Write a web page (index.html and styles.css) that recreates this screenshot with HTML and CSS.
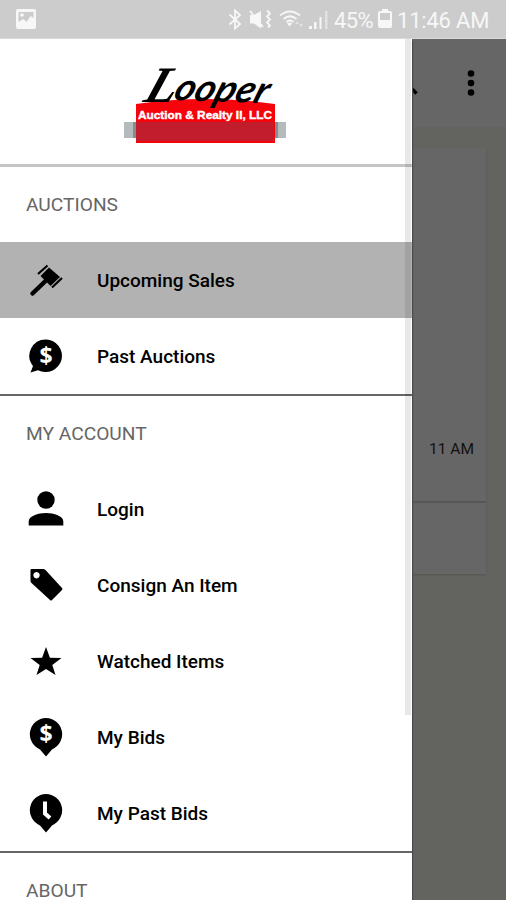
FILE: index.html
```html
<!DOCTYPE html>
<html lang="en">

<head>
    <meta charset="UTF-8">
    <meta name="viewport" content="width=device-width, initial-scale=1.0">
    <title>Looper Auction &amp; Realty</title>

    <link rel="stylesheet" href="styles.css">
</head>

<body>
    <header class="status">
        <svg class="status-picture" viewBox="0 0 20 20" width="20" height="20">
            <path fill-rule="evenodd" d="M2 0h16a2 2 0 0 1 2 2v16a2 2 0 0 1-2 2H2a2 2 0 0 1-2-2V2a2 2 0 0 1 2-2zM2.500 3v10l5-3 3 3 4-6 3 2V3z"/>
            <circle cx="6" cy="6" r="1.800"/>
        </svg>
        <svg class="status-icons" viewBox="228 0 101 38" width="101" height="38">
            <path class="line" d="M229.500 14.500L240 24l-5 4.500v-18l5 4.500-10.500 9.500"/>
            <path d="M250 15h4l7-4v17.500l-7-5h-4z"/>
            <path class="line" d="M250 11l13 16M267 10.500l3 3-3 3 3 3-3 3 3 3-2 2"/>
            <path class="line" d="M280 15.500q10-8 20 0M283.500 19q6.500-5.500 13 0M286.500 22q3.500-3 7 0"/>
            <path d="M287 23.500q3-2 5 0l-2.500 3z"/>
            <path class="faint" d="M295 24l2-3 2 3zM299 24h4l-2 3z"/>
            <path d="M309 26h3v3h-3zM314 22h2.500v7H314zM319.500 17h2v12h-2z"/>
            <path class="faint" d="M325 11h2.500v18H325z"/>
        </svg>
        <span class="status-battery">45%</span>
        <svg class="status-cell" viewBox="0 0 14 20" width="14" height="20">
            <path fill-rule="evenodd" d="M4 0h6v2h2q2 0 2 2v13q0 2-2 2H2q-2 0-2-2V4q0-2 2-2h2zM2 4v7h10V4z"/>
        </svg>
        <span class="status-time">11:46 AM</span>
    </header>

    <div class="screen">
        <main class="page">
            <div class="toolbar">
                <svg class="search" viewBox="0 0 24 24" width="28" height="28">
                    <circle cx="9.500" cy="9.500" r="5.500"/>
                    <path d="M14 14l7 7"/>
                </svg>
                <svg class="more" viewBox="0 0 8 28" width="8" height="28">
                    <circle cx="4" cy="4.500" r="3.300"/>
                    <circle cx="4" cy="14" r="3.300"/>
                    <circle cx="4" cy="23.500" r="3.300"/>
                </svg>
            </div>
            <div class="card">
                <div class="card-body">11 AM</div>
                <div class="card-footer"></div>
            </div>
        </main>

        <nav class="drawer">
            <div class="brand">
                <svg viewBox="0 0 164 80" width="164" height="80">
                    <path class="brand-bar" d="M1 57h162v16H1z"/>
                    <path class="brand-shade" d="M10 57h4v16h-4zM151 57h4v16h-4z"/>
                    <path class="brand-red" d="M13 39q35-5 70-5 35 0 69 5v39H13z"/>
                    <path class="brand-dark" d="M13 57h138v19H13z"/>
                    <text class="brand-name brand-initial" transform="translate(19 37) skewX(-20)" textLength="31" lengthAdjust="spacingAndGlyphs">L</text>
                    <text class="brand-name" transform="translate(49 35) rotate(2) skewX(-18)" textLength="93" lengthAdjust="spacingAndGlyphs">ooper</text>
                    <text class="brand-sub" x="15" y="54" textLength="134" lengthAdjust="spacingAndGlyphs">Auction &amp; Realty II, LLC</text>
                </svg>
            </div>

            <section>
                <h3>AUCTIONS</h3>
                <a class="item active">
                    <svg viewBox="0 0 36 36" width="36" height="36">
                        <path class="handle" d="M18 18.500L4.500 31.500"/>
                        <path class="line" d="M10 12L19.500 3.500M24 25.500l10-9.500"/>
                        <path d="M12.500 14L21 5.500l11 9.500-9.500 9z"/>
                    </svg>
                    Upcoming Sales
                </a>
                <a class="item">
                    <svg viewBox="0 0 36 36" width="36" height="36">
                        <path d="M18 1.500a16.300 16.300 0 1 1-8 30.700L2.500 34.500 5 28A16.300 16.300 0 0 1 18 1.500z"/>
                        <text class="sign" x="18" y="25.500">$</text>
                    </svg>
                    Past Auctions
                </a>
            </section>

            <section>
                <h3>MY ACCOUNT</h3>
                <a class="item">
                    <svg viewBox="0 0 36 36" width="36" height="36">
                        <circle cx="18" cy="9" r="8.700"/>
                        <path d="M.7 34.500v-4C.7 25 10 22 18 22s17.300 3 17.300 8.500v4z"/>
                    </svg>
                    Login
                </a>
                <a class="item">
                    <svg viewBox="0 0 36 36" width="36" height="36">
                        <path fill-rule="evenodd" d="M3.500 2H15q1.500 0 2.500 1l16.500 18q1 1 0 2L24 33q-1 1-2 0L3.500 16q-1-1-1-2V3q0-1 1-1zM8.500 5a3.200 3.200 0 1 0 .01 0z"/>
                    </svg>
                    Consign An Item
                </a>
                <a class="item">
                    <svg viewBox="0 0 36 36" width="36" height="36">
                        <path d="M18 4l3.900 10.700 11.600.3-9.200 7.100L27.500 32 18 26 8.500 32l3.200-9.900L2.500 15l11.600-.3z"/>
                    </svg>
                    Watched Items
                </a>
                <a class="item">
                    <svg viewBox="0 0 36 40" width="36" height="40">
                        <path d="M18 1a16.300 16.300 0 0 1 6 31.400L18 39.500l-6-7.100A16.300 16.300 0 0 1 18 1z"/>
                        <text class="sign" x="18" y="25">$</text>
                    </svg>
                    My Bids
                </a>
                <a class="item">
                    <svg viewBox="0 0 36 40" width="36" height="40">
                        <path d="M18 1a16.300 16.300 0 0 1 6 31.400L18 39.500l-6-7.100A16.300 16.300 0 0 1 18 1z"/>
                        <path class="hand" d="M17 8.500v12l5 4.500"/>
                    </svg>
                    My Past Bids
                </a>
            </section>

            <section>
                <h3>ABOUT</h3>
            </section>

            <div class="scrollbar"></div>
        </nav>
    </div>
</body>

</html>
```

FILE: styles.css
```css
* {
    box-sizing: border-box;
}

body {
    margin: 0;
    height: 100vh;
    display: flex;
    flex-direction: column;
    overflow: hidden;
    font-family: Roboto, sans-serif;
    background: #63635f;
}

.status {
    flex: none;
    display: flex;
    align-items: center;
    height: 39px;
    padding: 0 16px;
    background: #ccc;
    border-bottom: 1px solid #d8d8d8;
    color: #f7f7f7;
    fill: #f7f7f7;
    font-size: 22px;
    line-height: 38px;
    white-space: nowrap;
}

.status-icons {
    margin-left: auto;
}

.status-icons .line {
    fill: none;
    stroke: #f7f7f7;
    stroke-width: 1.8;
}

.faint {
    opacity: .5;
}

.status-battery {
    width: 40px;
    margin: 3px 4px 0 5px;
    letter-spacing: -0.6px;
}

.status-cell {
    margin-right: 5px;
}

.status-time {
    width: 93px;
    margin-top: 3px;
    letter-spacing: -0.2px;
}

.screen {
    position: relative;
    flex: 1;
    min-height: 0;
}

.toolbar {
    display: flex;
    justify-content: flex-end;
    align-items: center;
    gap: 47px;
    height: 88px;
    padding-right: 31px;
    background: #666;
}

.search {
    fill: none;
    stroke: #000;
    stroke-width: 3;
}

.card {
    margin: 21px 20px 0;
    background: #666;
    box-shadow: 0 1px 2px rgba(0, 0, 0, .15);
}

.card-body {
    height: 355px;
    padding: 292px 12px 0 0;
    border-bottom: 2px solid #575757;
    color: #111;
    font-size: 15.5px;
    line-height: 18px;
    text-align: right;
}

.card-footer {
    height: 71px;
}

/* drawer slides over the page */
.drawer {
    position: absolute;
    top: 0;
    left: 0;
    bottom: 0;
    width: 412px;
    overflow: hidden;
    background: #fff;
    box-shadow: 1px 2px 1px #4a4a4a;
}

.brand {
    display: flex;
    justify-content: center;
    height: 128px;
    padding-top: 26px;
    padding-right: 2px;
    border-bottom: 3px solid #c5c5c5;
}

.brand-bar { fill: #b3bbbd; }
.brand-shade { fill: #858d8e; }
.brand-red { fill: #f5040c; }
.brand-dark { fill: #c21d2c; }

.brand-name {
    font: italic bold 38px Lato, sans-serif;
}

.brand-initial {
    font: italic bold 51px "Liberation Serif", serif;
}

.brand-sub {
    fill: #fff;
    font: bold 11px "Liberation Sans", sans-serif;
    stroke: #fff;
    stroke-width: .4;
}

section + section {
    border-top: 2px solid #666;
}

h3 {
    margin: 0;
    padding-left: 26px;
    color: #666;
    font-size: 19.2px;
    font-weight: 400;
    line-height: 76px;
    height: 75px;
}

.item {
    display: flex;
    align-items: center;
    gap: 33px;
    height: 76px;
    padding-left: 28px;
    color: #000;
    font-size: 19px;
    font-weight: 500;
}

.item.active {
    background: #b2b2b2;
}

.item .line {
    stroke: #000;
    stroke-width: 2.2;
}

.handle {
    stroke: #000;
    stroke-width: 4.5;
    stroke-linecap: round;
}

.sign {
    fill: #fff;
    font: bold 23px "Open Sans", sans-serif;
    text-anchor: middle;
}

.hand {
    fill: none;
    stroke: #fff;
    stroke-width: 4;
}

.scrollbar {
    position: absolute;
    top: 0;
    right: 1px;
    width: 6px;
    height: 676px;
    background: rgba(0, 0, 0, .09);
}
```
